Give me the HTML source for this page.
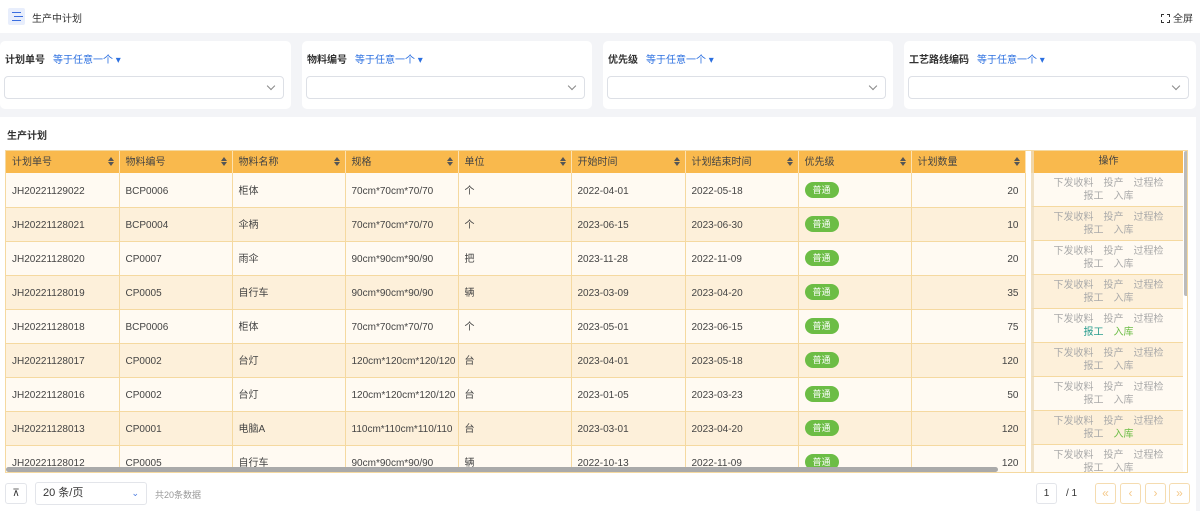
<!DOCTYPE html><html><head><meta charset="utf-8"><style>
*{box-sizing:border-box;margin:0;padding:0}
body{width:1200px;height:511px;overflow:hidden;background:#f3f4f7;font-family:"Liberation Sans","Noto Sans CJK SC",sans-serif;font-size:10px;color:#333;position:relative}
.top{position:absolute;left:0;top:0;width:1200px;height:33px;background:#fff}
.card{position:absolute;top:41px;height:68px;background:#fff;border-radius:5px}
.lab{position:absolute;left:5px;top:13px;font-size:10px;line-height:14px;color:#333;font-weight:bold}
.lab span{color:#2b6fe0;font-weight:normal;margin-left:8px}
.sel{position:absolute;left:4px;right:7px;top:35px;height:23px;border:1px solid #dde0e6;border-radius:4px}
.sel:after{content:"";position:absolute;right:9px;top:6px;width:5px;height:5px;border-right:1px solid #888;border-bottom:1px solid #888;transform:rotate(45deg)}
.main{position:absolute;left:0;top:117px;width:1196px;height:394px;background:#fff}
.tw{position:absolute;left:5px;top:150px;width:1183px;height:323px;overflow:hidden;border:1px solid #f5d9a0}
table{border-collapse:collapse;table-layout:fixed;position:absolute;left:0;top:0}
th{background:#f9b94d;height:22px;line-height:14px;text-align:left;padding:2px 0 0 6px;font-weight:normal;color:#444;border-right:1px solid #fde2b0;position:relative;vertical-align:middle}
th i{position:absolute;right:5px;top:6px;width:0;height:0;border-left:3px solid transparent;border-right:3px solid transparent;border-bottom:4px solid #555}
th i:after{content:"";position:absolute;left:-3px;top:5px;border-left:3px solid transparent;border-right:3px solid transparent;border-top:4px solid #555}
td{height:34px;line-height:14px;padding:4px 0 0 6px;border-right:1px solid #f5d9a0;border-bottom:1px solid #f5d9a0;color:#444;white-space:nowrap;overflow:hidden;vertical-align:middle}
td.t{padding-top:0}
tr.a td{background:#fffaf2}tr.b td{background:#fdf0da}
.num{text-align:right;padding-right:6px!important}
.tag{display:inline-block;background:#6cbd45;color:#fff;border-radius:9px;padding:0 8px;line-height:16px;font-size:9px}
.op{position:absolute;left:1025px;top:0;width:152px}
.op div.h{height:22px;background:#f9b94d;text-align:center;line-height:22px;color:#444;border-left:3px solid #f0d6a8}
.op div.r{height:34px;border-bottom:1px solid #f5d9a0;border-left:3px solid #f0e2c8;text-align:center;color:#aaa;line-height:13px;padding-top:4px}
.vs{position:absolute;left:1177px;top:0;width:6px;height:323px;background:#fff}
.vs b{position:absolute;left:1px;top:0;width:4px;height:145px;background:#bbb;border-radius:2px}
.hs{position:absolute;left:0;top:316px;width:992px;height:5px;background:#aaa;border-radius:3px}
.pb{position:absolute;top:483px;height:21px;border:1px solid #f5dcb0;border-radius:3px;color:#f5c98a;text-align:center;line-height:19px;font-size:12px;width:21px}
</style></head><body>
<div class="top">
<div style="position:absolute;left:8px;top:8px;width:17px;height:17px;background:#e8eefc;border-radius:2px"></div>
<div style="position:absolute;left:12px;top:12px;width:9px;height:1px;background:#3a6ee0;box-shadow:2px 4px 0 #3a6ee0,0 8px 0 #3a6ee0"></div>
<div style="position:absolute;left:32px;top:10px;font-size:10px">生产中计划</div>
<div style="position:absolute;left:1161px;top:10px;font-size:10px"><span style="display:inline-block;width:9px;height:9px;border:1px dashed #333;vertical-align:-1px;margin-right:3px"></span>全屏</div>
</div>
<div class="card" style="left:0;width:291px"><div class="lab">计划单号<span>等于任意一个 ▾</span></div><div class="sel"></div></div>
<div class="card" style="left:302px;width:290px"><div class="lab">物料编号<span>等于任意一个 ▾</span></div><div class="sel"></div></div>
<div class="card" style="left:603px;width:290px"><div class="lab">优先级<span>等于任意一个 ▾</span></div><div class="sel"></div></div>
<div class="card" style="left:904px;width:292px"><div class="lab">工艺路线编码<span>等于任意一个 ▾</span></div><div class="sel"></div></div>
<div class="main"><div style="position:absolute;left:7px;top:10px;font-weight:bold;font-size:10px">生产计划</div></div>
<div class="tw">
<table>
<colgroup><col width="113"><col width="113"><col width="113"><col width="113"><col width="113"><col width="114"><col width="113"><col width="113"><col width="114"></colgroup>
<tr><th>计划单号<i></i></th><th>物料编号<i></i></th><th>物料名称<i></i></th><th>规格<i></i></th><th>单位<i></i></th><th>开始时间<i></i></th><th>计划结束时间<i></i></th><th>优先级<i></i></th><th>计划数量<i></i></th></tr>
<tr class="a"><td>JH20221129022</td><td>BCP0006</td><td>柜体</td><td>70cm*70cm*70/70</td><td>个</td><td>2022-04-01</td><td>2022-05-18</td><td class="t"><span class="tag">普通</span></td><td class="num">20</td></tr>
<tr class="b"><td>JH20221128021</td><td>BCP0004</td><td>伞柄</td><td>70cm*70cm*70/70</td><td>个</td><td>2023-06-15</td><td>2023-06-30</td><td class="t"><span class="tag">普通</span></td><td class="num">10</td></tr>
<tr class="a"><td>JH20221128020</td><td>CP0007</td><td>雨伞</td><td>90cm*90cm*90/90</td><td>把</td><td>2023-11-28</td><td>2022-11-09</td><td class="t"><span class="tag">普通</span></td><td class="num">20</td></tr>
<tr class="b"><td>JH20221128019</td><td>CP0005</td><td>自行车</td><td>90cm*90cm*90/90</td><td>辆</td><td>2023-03-09</td><td>2023-04-20</td><td class="t"><span class="tag">普通</span></td><td class="num">35</td></tr>
<tr class="a"><td>JH20221128018</td><td>BCP0006</td><td>柜体</td><td>70cm*70cm*70/70</td><td>个</td><td>2023-05-01</td><td>2023-06-15</td><td class="t"><span class="tag">普通</span></td><td class="num">75</td></tr>
<tr class="b"><td>JH20221128017</td><td>CP0002</td><td>台灯</td><td>120cm*120cm*120/120</td><td>台</td><td>2023-04-01</td><td>2023-05-18</td><td class="t"><span class="tag">普通</span></td><td class="num">120</td></tr>
<tr class="a"><td>JH20221128016</td><td>CP0002</td><td>台灯</td><td>120cm*120cm*120/120</td><td>台</td><td>2023-01-05</td><td>2023-03-23</td><td class="t"><span class="tag">普通</span></td><td class="num">50</td></tr>
<tr class="b"><td>JH20221128013</td><td>CP0001</td><td>电脑A</td><td>110cm*110cm*110/110</td><td>台</td><td>2023-03-01</td><td>2023-04-20</td><td class="t"><span class="tag">普通</span></td><td class="num">120</td></tr>
<tr class="a"><td>JH20221128012</td><td>CP0005</td><td>自行车</td><td>90cm*90cm*90/90</td><td>辆</td><td>2022-10-13</td><td>2022-11-09</td><td class="t"><span class="tag">普通</span></td><td class="num">120</td></tr>
</table>
<div class="hs"></div>
<div class="op">
<div class="h">操作</div>
<div class="r" style="background:#fffaf2">下发收料　投产　过程检<br>报工　入库</div>
<div class="r" style="background:#fdf0da">下发收料　投产　过程检<br>报工　入库</div>
<div class="r" style="background:#fffaf2">下发收料　投产　过程检<br>报工　入库</div>
<div class="r" style="background:#fdf0da">下发收料　投产　过程检<br>报工　入库</div>
<div class="r" style="background:#fffaf2">下发收料　投产　过程检<br><span style="color:#2a9d8f">报工</span>　<span style="color:#6cbd45">入库</span></div>
<div class="r" style="background:#fdf0da">下发收料　投产　过程检<br>报工　入库</div>
<div class="r" style="background:#fffaf2">下发收料　投产　过程检<br>报工　入库</div>
<div class="r" style="background:#fdf0da">下发收料　投产　过程检<br>报工　<span style="color:#6cbd45">入库</span></div>
<div class="r" style="background:#fffaf2">下发收料　投产　过程检<br>报工　入库</div>
</div>
<div class="vs"><b></b></div>
</div>
<div style="position:absolute;left:5px;top:483px;width:22px;height:21px;border:1px solid #e3e5ea;border-radius:3px;text-align:center;line-height:19px;font-size:10px">⊼</div>
<div style="position:absolute;left:35px;top:482px;width:112px;height:23px;border:1px solid #e3e5ea;border-radius:3px;padding-left:7px;line-height:21px;font-size:11px">20 条/页<span style="position:absolute;right:7px;top:0;color:#4a7be0;font-size:9px">⌄</span></div>
<div style="position:absolute;left:155px;top:488px;color:#999;font-size:9px">共20条数据</div>
<div style="position:absolute;left:1036px;top:483px;width:21px;height:21px;border:1px solid #e3e5ea;border-radius:3px;text-align:center;line-height:19px;font-size:10px">1</div>
<div style="position:absolute;left:1066px;top:488px;font-size:10px">/ 1</div>
<div class="pb" style="left:1095px">«</div><div class="pb" style="left:1120px">‹</div><div class="pb" style="left:1145px">›</div><div class="pb" style="left:1169px">»</div>
</body></html>
